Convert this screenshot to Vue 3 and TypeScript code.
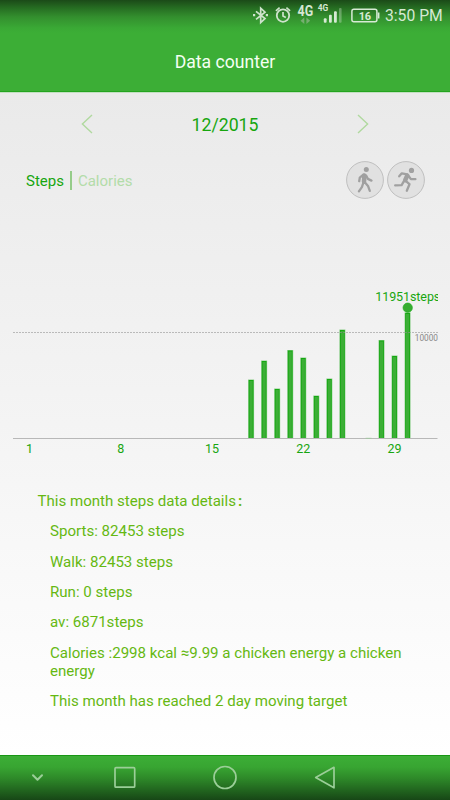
<script setup lang="ts">
interface Bar {
  day: number
  top: number
}

const baseline = 438
const bars: Bar[] = [
  { day: 18, top: 380 },
  { day: 19, top: 361 },
  { day: 20, top: 389 },
  { day: 21, top: 350.5 },
  { day: 22, top: 358 },
  { day: 23, top: 396 },
  { day: 24, top: 379 },
  { day: 25, top: 330 },
  { day: 28, top: 340.5 },
  { day: 29, top: 356 },
  { day: 30, top: 313 },
]
const ticks: number[] = [1, 8, 15, 22, 29]
const centre = (day: number): number => 251.1 + (day - 18) * 13.04

const details: string[] = [
  'Sports: 82453 steps',
  'Walk: 82453 steps',
  'Run: 0 steps',
  'av: 6871steps',
  'Calories :2998 kcal ≈9.99 a chicken energy a chicken energy',
  'This month has reached 2 day moving target',
]
</script>

<template>
  <div class="screen">
    <header class="top">
      <div class="status">
        <svg class="status-icons" width="140" height="30" viewBox="240 0 140 30" fill="none">
          <g stroke="#cfe3cd" stroke-width="1.7">
            <path d="M256 11.3l9 7.2-4.3 4V8.2l4.3 3.9-9 7.3" />
            <path d="M253 15.2h2.2M265.8 15.2h2.2" stroke-width="2.2" />
            <circle cx="283" cy="15.6" r="6.2" stroke-width="1.8" />
            <path d="M283 12v4l2.8 1.4M275.9 10.9l3.7-3.2M290.1 10.9l-3.7-3.2" />
          </g>
          <g fill="#d5e7d3" font-family="Roboto, sans-serif">
            <text transform="translate(297.6 15.6) scale(.86 1)" font-size="14.5" font-weight="700">4G</text>
            <text x="317.8" y="11.3" font-size="8.5" font-weight="700" textLength="10.5" lengthAdjust="spacingAndGlyphs">4G</text>
          </g>
          <path d="M304.3 17.5v6.5l-3.8-3.2zM306.4 17.5v6.5l3.8-3.2z" fill="#76ae70" />
          <g fill="#d7ead5">
            <rect x="323.8" y="18.2" width="2.8" height="4.5" rx="1" />
            <rect x="329" y="14.8" width="2.8" height="7.9" rx="1" />
            <rect x="334" y="11.2" width="2.8" height="11.5" rx="1" />
            <rect x="339" y="8" width="2.6" height="14.7" rx="1" opacity="0.35" />
          </g>
          <rect x="351.9" y="9.3" width="25" height="12.5" rx="2" stroke="#d7ead5" stroke-width="1.5" />
          <path d="M378.6 12.5v6" stroke="#d7ead5" stroke-width="1.7" />
          <text x="358.8" y="19.5" font-size="11" font-weight="700" fill="#d7ead5" font-family="Roboto, sans-serif" textLength="12.3">16</text>
        </svg>
        <span class="clock">3:50 PM</span>
      </div>
      <h1>Data counter</h1>
    </header>

    <main>
      <div class="month">
        <svg width="12" height="20" viewBox="0 0 12 20"><path d="M11 1L1.4 10 11 19" /></svg>
        <span class="date">12/2015</span>
        <svg width="12" height="20" viewBox="0 0 12 20"><path d="M1 1l9.6 9L1 19" /></svg>
      </div>

      <div class="filters">
        <span class="tab active">Steps</span>
        <span class="divider"></span>
        <span class="tab">Calories</span>
        <div class="modes">
          <svg width="38" height="38" viewBox="0 0 38 38">
            <circle class="disc" cx="19" cy="19" r="18.4" />
            <circle class="head" cx="20.3" cy="8.6" r="2.5" />
            <path class="torso" d="M18.4 14.6l-.4 6" />
            <path class="limb" d="M17.4 13.6l-3.6 3-.6 3.6M20.1 14.6l1.8 3.3 3.6 1.7M18.6 21l3.4 3.9 1.8 5M17.4 21.5l-1.5 4.6-3 4.2" />
          </svg>
          <svg width="38" height="38" viewBox="0 0 38 38">
            <circle class="disc" cx="19" cy="19" r="18.4" />
            <circle class="head" cx="24.5" cy="9.4" r="2.6" />
            <path class="torso" d="M20.2 14.6l-2 4.6" />
            <path class="limb" d="M20.2 13.3l-5.4-1-2.6 3M21.4 14.8l2.5 3.3 4.5.1M18.3 19.6l4.2 3.6-2.7 6.6M17.2 19.7l-2.6 4.5-6.4.2" />
          </svg>
        </div>
      </div>

      <svg class="chart" width="425" height="180" viewBox="13 280 425 180">
        <path d="M13 332.5H438" stroke="#bababa" stroke-dasharray="2 1" />
        <g v-for="bar in bars" :key="bar.day">
          <rect :x="centre(bar.day) - 3" :y="bar.top - 0.5" width="6" :height="baseline - bar.top + 0.5" fill="#8bcd88" />
          <rect :x="centre(bar.day) - 2.4" :y="bar.top" width="4.8" :height="baseline - bar.top" fill="#15a812" />
          <rect :x="centre(bar.day) - 1.6" :y="bar.top + 1" width="3.2" :height="baseline - bar.top - 1" fill="#3cae36" />
        </g>
        <path d="M405 332.5h5.5M340 332.5h5" stroke="#6b9b68" stroke-dasharray="2 1" />
        <path d="M13 438.5H437.5" stroke="#b8b8b8" />
        <path d="M365.6 438.3h6" stroke="#9ccb9a" stroke-width=".8" />
        <circle cx="407.7" cy="307.7" r="4.7" fill="#36ad31" stroke="#1aa817" stroke-width=".6" />
        <text class="label" x="375.3" y="300.5" textLength="65">11951steps</text>
        <text class="limit" x="414.8" y="341" textLength="23.2" lengthAdjust="spacingAndGlyphs">10000</text>
        <text v-for="tick in ticks" :key="tick" class="label" :x="centre(tick)" y="453.2" text-anchor="middle">{{ tick }}</text>
      </svg>

      <section class="details">
        <h2>This month steps data details<span class="colon">:</span></h2>
        <p v-for="line in details" :key="line">{{ line }}</p>
      </section>
    </main>

    <nav>
      <svg width="450" height="45" viewBox="0 755 450 45" fill="none" stroke="#9bce98" stroke-width="1.7" stroke-linejoin="round" stroke-linecap="round">
        <path d="M33 775.2l4.5 4.5 4.5-4.5" stroke-width="2" />
        <rect x="115" y="767.7" width="19.7" height="19.5" rx="1" />
        <circle cx="225" cy="777.5" r="11" />
        <path d="M334 767.3v20.5l-18.3-10.2z" />
      </svg>
    </nav>
  </div>
</template>

<style>
body {
  margin: 0;
}
</style>

<style scoped>
.screen {
  width: 450px;
  height: 800px;
  display: flex;
  flex-direction: column;
  overflow: hidden;
  font-family: Roboto, sans-serif;
  background: #fff;
}
.top {
  height: 92px;
  box-sizing: border-box;
  flex: none;
  border-bottom: 1px solid #24a51f;
  background: linear-gradient(#1b4a18 0, #266d22 8px, #338f2e 17px, #3aa935 28px, #3cae36 33px);
}
.status {
  display: flex;
  height: 30px;
  justify-content: flex-end;
  padding-right: 8px;
}
.status-icons {
  flex: none;
}
.clock {
  width: 57px;
  margin-left: 5px;
  font-size: 15.7px;
  line-height: 32px;
  color: #d5e9d3;
  white-space: nowrap;
}
h1 {
  margin: 20px 0 0;
  font-size: 17.6px;
  line-height: 24px;
  font-weight: 400;
  text-align: center;
  color: #f4fff3;
}
main {
  flex: 1;
  border-top: 1px solid #c3dfc1;
  background: linear-gradient(#eaeaea, #f4f4f4 50%, #fff);
}
.month {
  display: flex;
  justify-content: space-between;
  align-items: center;
  height: 62px;
  padding: 0 81px;
}
.month path {
  fill: none;
  stroke: #b0d99f;
  stroke-width: 1.4;
}
.date {
  padding-top: 2px;
  font-size: 17.7px;
  color: #17a60f;
}
.filters {
  display: flex;
  align-items: center;
  height: 50px;
  padding: 0 25px 0 26px;
}
.tab {
  padding-top: 2px;
  font-size: 15px;
  color: #b3dca9;
}
.tab.active {
  color: #17a60f;
}
.divider {
  width: 2px;
  height: 19px;
  margin: 0 6px;
  background: #96cc8a;
}
.modes {
  display: flex;
  gap: 3px;
  margin-left: auto;
}
.disc {
  fill: #e1e1e1;
  stroke: #bfbfbf;
}
.head {
  fill: #a0a0a0;
}
.limb,
.torso {
  fill: none;
  stroke: #a0a0a0;
  stroke-width: 2.3;
  stroke-linecap: round;
  stroke-linejoin: round;
}
.torso {
  stroke-width: 4.5;
}
.chart {
  display: block;
  margin: 75px 0 0 13px;
}
.label {
  font-size: 12.5px;
  fill: #17a60f;
}
.limit {
  font-size: 8.5px;
  fill: #888;
}
.details {
  padding: 32.3px 30px 0 50px;
  color: #65b812;
  font-size: 15.07px;
  line-height: 18px;
}
h2 {
  margin: 0 0 12.2px -12.5px;
  font-size: inherit;
  line-height: inherit;
  font-weight: 400;
}
.colon {
  margin-left: 2px;
  font-weight: 700;
}
p {
  margin: 0 0 12.3px;
}
nav {
  height: 45px;
  flex: none;
  background: linear-gradient(#189615 0, #189615 1px, #3cae36 1px, #38a532 12px, #2e8a29 23px, #174716 45px);
}
nav svg {
  display: block;
}
</style>
